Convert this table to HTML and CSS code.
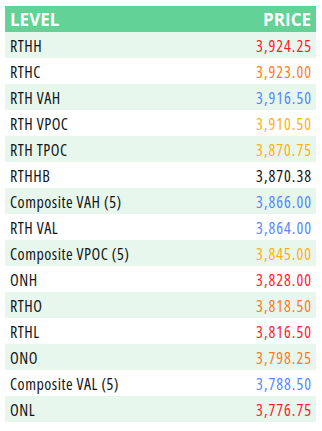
FILE: index.html
```html
<!DOCTYPE html>
<html>
<head>
<meta charset="utf-8">
<link rel="stylesheet" href="styles.css">
</head>
<body>
<table class="levels">
  <thead>
    <tr><th class="lvl">LEVEL</th><th class="price">PRICE</th></tr>
  </thead>
  <tbody>
    <tr><td>RTHH</td><td class="price red">3,924.25</td></tr>
    <tr><td>RTHC</td><td class="price orange">3,923.00</td></tr>
    <tr><td>RTH VAH</td><td class="price blue">3,916.50</td></tr>
    <tr><td>RTH VPOC</td><td class="price gold">3,910.50</td></tr>
    <tr><td>RTH TPOC</td><td class="price gold">3,870.75</td></tr>
    <tr><td>RTHHB</td><td class="price black">3,870.38</td></tr>
    <tr><td>Composite VAH (5)</td><td class="price blue">3,866.00</td></tr>
    <tr><td>RTH VAL</td><td class="price blue">3,864.00</td></tr>
    <tr><td>Composite VPOC (5)</td><td class="price gold">3,845.00</td></tr>
    <tr><td>ONH</td><td class="price red">3,828.00</td></tr>
    <tr><td>RTHO</td><td class="price orange">3,818.50</td></tr>
    <tr><td>RTHL</td><td class="price red">3,816.50</td></tr>
    <tr><td>ONO</td><td class="price orange">3,798.25</td></tr>
    <tr><td>Composite VAL (5)</td><td class="price blue">3,788.50</td></tr>
    <tr><td>ONL</td><td class="price red">3,776.75</td></tr>
  </tbody>
</table>
</body>
</html>
```
FILE: styles.css
```css
html, body {
  margin: 0;
  padding: 0;
  background: #ffffff;
}
body {
  padding: 6px 6px 0 5px;
  font-family: "Open Sans", "DejaVu Sans Condensed", sans-serif;
  font-stretch: 75%;
}
.levels {
  width: 311px;
  border-collapse: collapse;
  font-size: 16px;
  color: #141414;
}
.levels th {
  background: #62d296;
  color: #ffffff;
  font-size: 17px;
  font-weight: bold;
  font-stretch: 100%;
  height: 26px;
  box-sizing: border-box;
  padding: 1px 5px 0;
  text-align: left;
  vertical-align: middle;
}
.levels td {
  height: 26px;
  box-sizing: border-box;
  padding: 1px 5px 0;
  vertical-align: middle;
  letter-spacing: 0.5px;
}
.levels tbody tr:nth-child(odd) {
  background: #e7f7ee;
}
.levels .price {
  text-align: right;
}
.levels td.price {
  letter-spacing: 1px;
  padding-right: 4px;
}
.red { color: #ff1a2a; }
.orange { color: #ff7a1a; }
.blue { color: #5585ff; }
.gold { color: #ffb10a; }
.black { color: #111111; }
```
